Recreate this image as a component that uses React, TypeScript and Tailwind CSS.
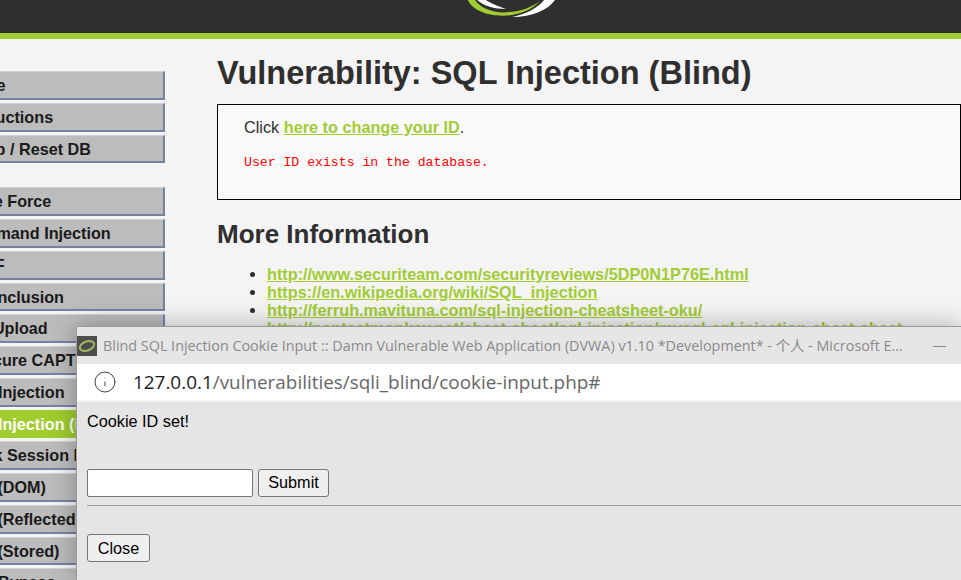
import { Info } from "lucide-react"

const mainMenu = ["Home", "Instructions", "Setup / Reset DB"]

const vulnMenu = [
  "Brute Force",
  "Command Injection",
  "CSRF",
  "File Inclusion",
  "File Upload",
  "Insecure CAPTCHA",
  "SQL Injection",
  "SQL Injection (Blind)",
  "Weak Session IDs",
  "XSS (DOM)",
  "XSS (Reflected)",
  "XSS (Stored)",
  "CSP Bypass",
]

const links = [
  "http://www.securiteam.com/securityreviews/5DP0N1P76E.html",
  "https://en.wikipedia.org/wiki/SQL_injection",
  "http://ferruh.mavituna.com/sql-injection-cheatsheet-oku/",
  "http://pentestmonkey.net/cheat-sheet/sql-injection/mysql-sql-injection-cheat-sheet",
]

function MenuItem({ label }: { label: string }) {
  const active = label === "SQL Injection (Blind)"
  return (
    <div
      className={`mb-[3px] h-[28.75px] whitespace-nowrap border-t border-r-2 border-b-2 pl-[10.5px] text-[16.2px] leading-[26px] font-bold ${
        active
          ? "border-t-[#a6d030] border-r-[#9fcd2e] border-b-[#9fcd2e] bg-[#9fcd2e] text-white"
          : "border-t-[#d2d2d2] border-r-[#7384a3] border-b-[#7384a3] bg-[#bcbcbc] text-[#1a1a1a]"
      }`}
    >
      {label}
    </div>
  )
}

function Logo() {
  return (
    <svg width="100" height="17" viewBox="0 0 100 17" className="absolute top-0 left-[462px]">
      <path d="M6 0 C10 11 30 18 50 15 C62 13 72 8 78 1 C70 7 60 11 48 12 C32 14 18 8 13 0 Z" fill="#a2cd32" />
      <path d="M15 0 C22 6 32 9 44 9 C36 6 28 3 24 0 Z" fill="#ffffff" />
      <path d="M50 17 C70 17 86 10 93 0 L82 0 C76 8 64 14 50 17 Z" fill="#ffffff" />
    </svg>
  )
}

function Favicon() {
  return (
    <div className="flex h-[20px] w-[20px] items-center justify-center bg-[#4d4d4d]">
      <svg width="20" height="20" viewBox="0 0 20 20">
        <ellipse cx="10" cy="10" rx="7.5" ry="4.5" transform="rotate(-20 10 10)" fill="none" stroke="#a3b865" strokeWidth="2" />
      </svg>
    </div>
  )
}

function PopupWindow() {
  return (
    <div className="absolute top-[326px] left-[76px] h-[254px] w-[885px] border-t border-l border-[#9a9a9a] bg-[#e5e5e5] shadow-[0_0_24px_rgba(0,0,0,0.3)]">
      <div className="flex h-[37px] items-center bg-[#e6e6e6] pt-[1px]">
        <Favicon />
        <span className="ml-[6px] w-[800px] whitespace-nowrap font-['Open_Sans','Noto_Sans_CJK_SC',sans-serif] text-[14.37px] text-[#8a8a8a]">
          Blind SQL Injection Cookie Input :: Damn Vulnerable Web Application (DVWA) v1.10 *Development* - 个人 - Microsoft E...
        </span>
        <div className="ml-[30px] h-px w-[13px] bg-[#858585]" />
      </div>
      <div className="flex h-[38px] items-center border-b-2 border-[#f2f2f2] bg-white pl-[15.5px]">
        <Info size={24} strokeWidth={1} className="text-[#444444]" />
        <span className="ml-[16.5px] whitespace-nowrap font-['Open_Sans',sans-serif] text-[18.9px] text-[#666666]">
          <span className="text-[#1c1c1c]">127.0.0.1</span>/vulnerabilities/sqli_blind/cookie-input.php#
        </span>
      </div>
      <div className="pt-[10px] pl-[10px] font-['Liberation_Sans',sans-serif] text-[16.25px] text-black">
        <p className="leading-[18px]">Cookie ID set!</p>
        <div className="mt-[30px] flex items-center gap-[5px] pt-[9px]">
          <input className="h-[28px] w-[166px] rounded-[2px] border border-[#767676] bg-white" />
          <button className="h-[28px] w-[71px] rounded-[3px] border border-[#767676] bg-[#efefef] pb-[2px]">Submit</button>
        </div>
        <div className="mt-[8px] h-px bg-[#a0a0a0]" />
        <button className="mt-[28px] h-[28px] w-[63px] rounded-[3px] border border-[#767676] bg-[#efefef]">Close</button>
      </div>
    </div>
  )
}

export default function App() {
  return (
    <div className="relative h-[580px] w-[961px] overflow-hidden bg-[#f4f4f4] font-['Liberation_Sans',sans-serif]">
      <header className="relative h-[39px] border-b-[6px] border-[#a1cc33] bg-[#2f2f2f]">
        <Logo />
      </header>

      <div className="flex">
        <nav className="ml-[-50px] w-[215px] shrink-0 pt-[32px]">
          <div className="mb-[24px]">
            {mainMenu.map((item) => (
              <MenuItem key={item} label={item} />
            ))}
          </div>
          {vulnMenu.map((item) => (
            <MenuItem key={item} label={item} />
          ))}
        </nav>

        <main className="ml-[52px] min-w-0 flex-1 text-[#2f2f2f]">
          <h1 className="mt-[15px] text-[32.5px] leading-[38px] font-bold whitespace-nowrap">
            Vulnerability: SQL Injection (Blind)
          </h1>
          <div className="mt-[12px] h-[96px] border border-black bg-[#f9f9f9] pt-[13px] pl-[26px]">
            <p className="text-[16.25px] leading-[18px]">
              Click{" "}
              <a className="font-bold text-[#a1cc33] underline">here to change your ID</a>.
            </p>
            <pre className="mt-[19px] font-['Liberation_Mono',monospace] text-[13.17px] leading-[15px] text-[#ff0000]">
              User ID exists in the database.
            </pre>
          </div>
          <h2 className="mt-[19px] text-[26px] leading-[30px] font-bold">More Information</h2>
          <ul className="mt-[16px] list-disc pl-[50px] text-[16.25px] leading-[18px]">
            {links.map((href) => (
              <li key={href}>
                <a className="font-bold whitespace-nowrap text-[#a1cc33] underline">{href}</a>
              </li>
            ))}
          </ul>
        </main>
      </div>

      <PopupWindow />
    </div>
  )
}
